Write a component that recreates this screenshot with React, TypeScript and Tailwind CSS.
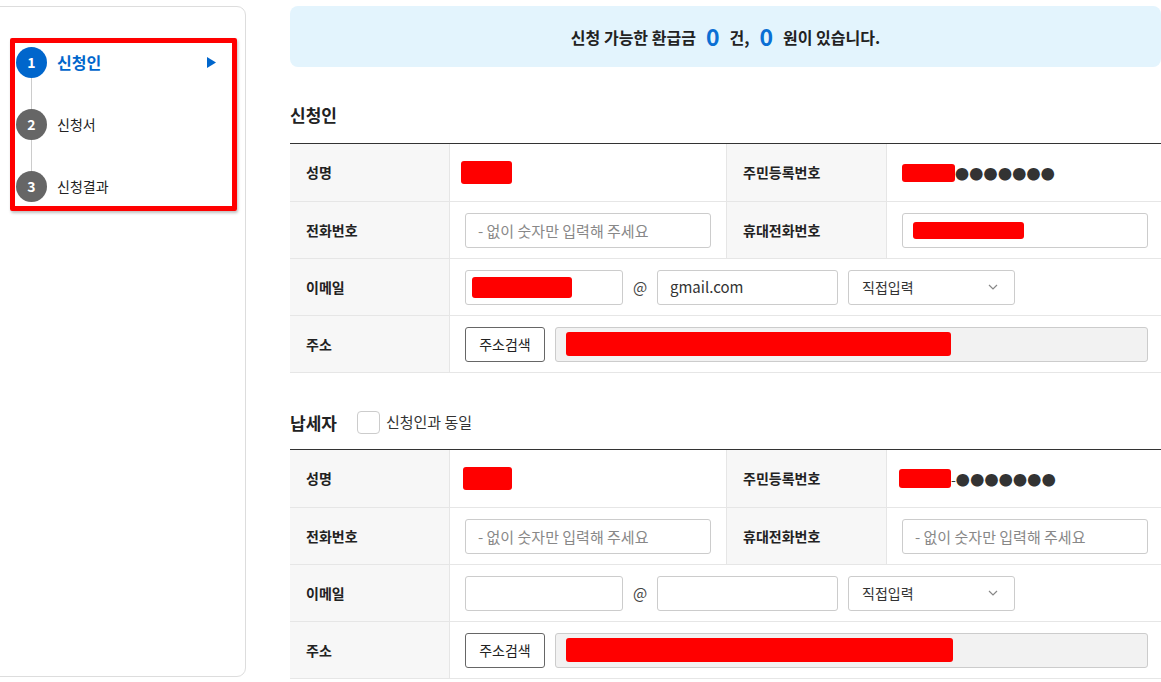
import React from "react";

const font = { fontFamily: '"Noto Sans CJK KR", "Noto Sans", sans-serif' };

function Redact({ w, h, className = "" }: { w: string; h: string; className?: string }) {
  return <span className={`inline-block bg-[#ff0000] rounded-[3px] ${w} ${h} ${className}`} />;
}

function Dots({ dash = false }: { dash?: boolean }) {
  return (
    <span className="flex items-center text-[#333]">
      {dash && <span className="text-[14px] leading-none text-[#333]">-</span>}
      <span className="text-[14px] leading-none tracking-[0.3px]">●●●●●●●</span>
    </span>
  );
}

function Label({ children, border = "border-r" }: { children: React.ReactNode; border?: string }) {
  return (
    <div className={`bg-[#f7f7f7] ${border} border-[#e6e6e6] flex items-center pl-[16px] text-[14px] font-bold text-[#222]`}>
      {children}
    </div>
  );
}

function PhoneInput() {
  return (
    <input
      placeholder="- 없이 숫자만 입력해 주세요"
      className="w-[246px] h-[35px] border border-[#cccccc] rounded-[3px] px-[12px] text-[15px] text-[#333] placeholder:text-[#888] bg-white outline-none"
    />
  );
}

function Box({ w, children, gray = false }: { w: string; children?: React.ReactNode; gray?: boolean }) {
  return (
    <div className={`${w} h-[35px] border border-[#cccccc] rounded-[3px] flex items-center px-[10px] text-[14px] text-[#333] ${gray ? "bg-[#f2f2f2]" : "bg-white"}`}>
      {children}
    </div>
  );
}

function SelectBox() {
  return (
    <div className="w-[167px] h-[35px] border border-[#cccccc] rounded-[3px] flex items-center justify-between pl-[13px] pr-[16px] text-[14px] text-[#333] bg-white">
      <span>직접입력</span>
      <svg width="10" height="6" viewBox="0 0 10 6" fill="none">
        <path d="M1 1l4 4 4-4" stroke="#888" strokeWidth="1.2" />
      </svg>
    </div>
  );
}

function AddressRow({ redW }: { redW: string }) {
  return (
    <div className="flex items-center pl-[15px] pr-[13px] gap-[10px]">
      <button className="w-[80px] h-[35px] border border-[#666] rounded-[3px] text-[14px] text-[#222] bg-white shrink-0">주소검색</button>
      <Box w="flex-1" gray>
        <Redact w={redW} h="h-[24px]" />
      </Box>
    </div>
  );
}

function Table({ second = false }: { second?: boolean }) {
  const row = "grid grid-cols-[160px_276px_161px_1fr] h-[57px] border-b border-[#e6e6e6]";
  return (
    <div className="border-t border-[#333]">
      <div className="grid grid-cols-[160px_276px_161px_1fr] h-[58px] border-b border-[#e6e6e6]">
        <Label>성명</Label>
        <div className={`flex items-center ${second ? "pl-[13px]" : "pl-[11px]"}`}>
          <Redact w={second ? "w-[49px]" : "w-[51px]"} h="h-[23px]" />
        </div>
        <Label border="border-x">주민등록번호</Label>
        <div className={`flex items-center ${second ? "pl-[12px]" : "pl-[15px]"}`}>
          <Redact w={second ? "w-[52px]" : "w-[53px]"} h={second ? "h-[19px]" : "h-[18px]"} />
          <Dots dash={second} />
        </div>
      </div>
      <div className={row}>
        <Label>전화번호</Label>
        <div className="flex items-center pl-[15px]">
          <PhoneInput />
        </div>
        <Label border="border-x">휴대전화번호</Label>
        <div className="flex items-center pl-[15px]">
          {second ? (
            <PhoneInput />
          ) : (
            <Box w="w-[246px]">
              <Redact w="w-[111px]" h="h-[17px]" />
            </Box>
          )}
        </div>
      </div>
      <div className="grid grid-cols-[160px_1fr] h-[57px] border-b border-[#e6e6e6]">
        <Label>이메일</Label>
        <div className="flex items-center pl-[15px]">
          <Box w="w-[158px]">{!second && <Redact w="w-[100px]" h="h-[21px]" className="-ml-[4px]" />}</Box>
          <span className="w-[34px] text-center text-[15px] text-[#444]">@</span>
          <Box w="w-[181px]">{!second && <span className="text-[15px] text-[#333] pl-[2px]">gmail.com</span>}</Box>
          <div className="w-[10px]" />
          <SelectBox />
        </div>
      </div>
      <div className="grid grid-cols-[160px_1fr] h-[57px] border-b border-[#e6e6e6]">
        <Label>주소</Label>
        <AddressRow redW={second ? "w-[387px]" : "w-[385px]"} />
      </div>
    </div>
  );
}

export default function App() {
  return (
    <div className="w-[1161px] h-[682px] overflow-hidden bg-white flex" style={font}>
      <aside className="ml-[-10px] w-[256px] h-[671px] mt-[6px] border border-[#dddddd] rounded-[9px] shrink-0 pt-[31px] pl-[19px]">
        <div className="w-[227px] h-[173px] border-[5px] border-[#ff0000] rounded-[2px] shadow-[1px_2px_3px_rgba(0,0,0,0.25)] pl-[1px] pt-[4px] overflow-hidden">
          <div className="relative">
            <div className="absolute left-[15px] top-[20px] w-[1px] h-[130px] bg-[#cccccc]" />
            <div className="relative h-[62px] flex items-start">
              <div className="flex items-center h-[30px] w-full">
                <span className="w-[31px] h-[31px] rounded-full bg-[#0066cc] text-white text-[14px] font-bold flex items-center justify-center shrink-0">1</span>
                <span className="ml-[10px] text-[16px] font-bold text-[#0066cc]">신청인</span>
                <svg className="ml-auto mr-[16px]" width="9" height="11" viewBox="0 0 9 11">
                  <polygon points="0,0 9,5.5 0,11" fill="#0066cc" />
                </svg>
              </div>
            </div>
            <div className="relative h-[62px] flex items-start">
              <div className="flex items-center h-[31px]">
                <span className="w-[31px] h-[31px] rounded-full bg-[#666666] text-white text-[14px] font-bold flex items-center justify-center shrink-0">2</span>
                <span className="ml-[10px] text-[14px] text-[#222]">신청서</span>
              </div>
            </div>
            <div className="relative h-[40px] flex items-start">
              <div className="flex items-center h-[31px]">
                <span className="w-[31px] h-[31px] rounded-full bg-[#666666] text-white text-[14px] font-bold flex items-center justify-center shrink-0">3</span>
                <span className="ml-[10px] text-[14px] text-[#222]">신청결과</span>
              </div>
            </div>
          </div>
        </div>
      </aside>
      <main className="ml-[44px] w-[871px] shrink-0 pt-[6px]">
        <div className="h-[61px] rounded-[8px] bg-[#e3f4fd] flex items-center justify-center text-[16px] font-bold text-[#222]">
          <span>신청 가능한 환급금</span>
          <span className="mx-[10px] text-[23px] text-[#0a6fd4] leading-none">0</span>
          <span>건,</span>
          <span className="mx-[10px] text-[23px] text-[#0a6fd4] leading-none">0</span>
          <span>원이 있습니다.</span>
        </div>
        <div className="h-[76px] pt-[20px] flex items-center text-[17px] font-bold text-[#222]">신청인</div>
        <Table />
        <div className="h-[76px] pt-[23px] flex items-center">
          <span className="text-[17px] font-bold text-[#222]">납세자</span>
          <span className="ml-[20px] w-[23px] h-[23px] border border-[#cccccc] rounded-[4px] bg-white" />
          <span className="ml-[6px] text-[15px] text-[#333]">신청인과 동일</span>
        </div>
        <Table second />
      </main>
    </div>
  );
}
